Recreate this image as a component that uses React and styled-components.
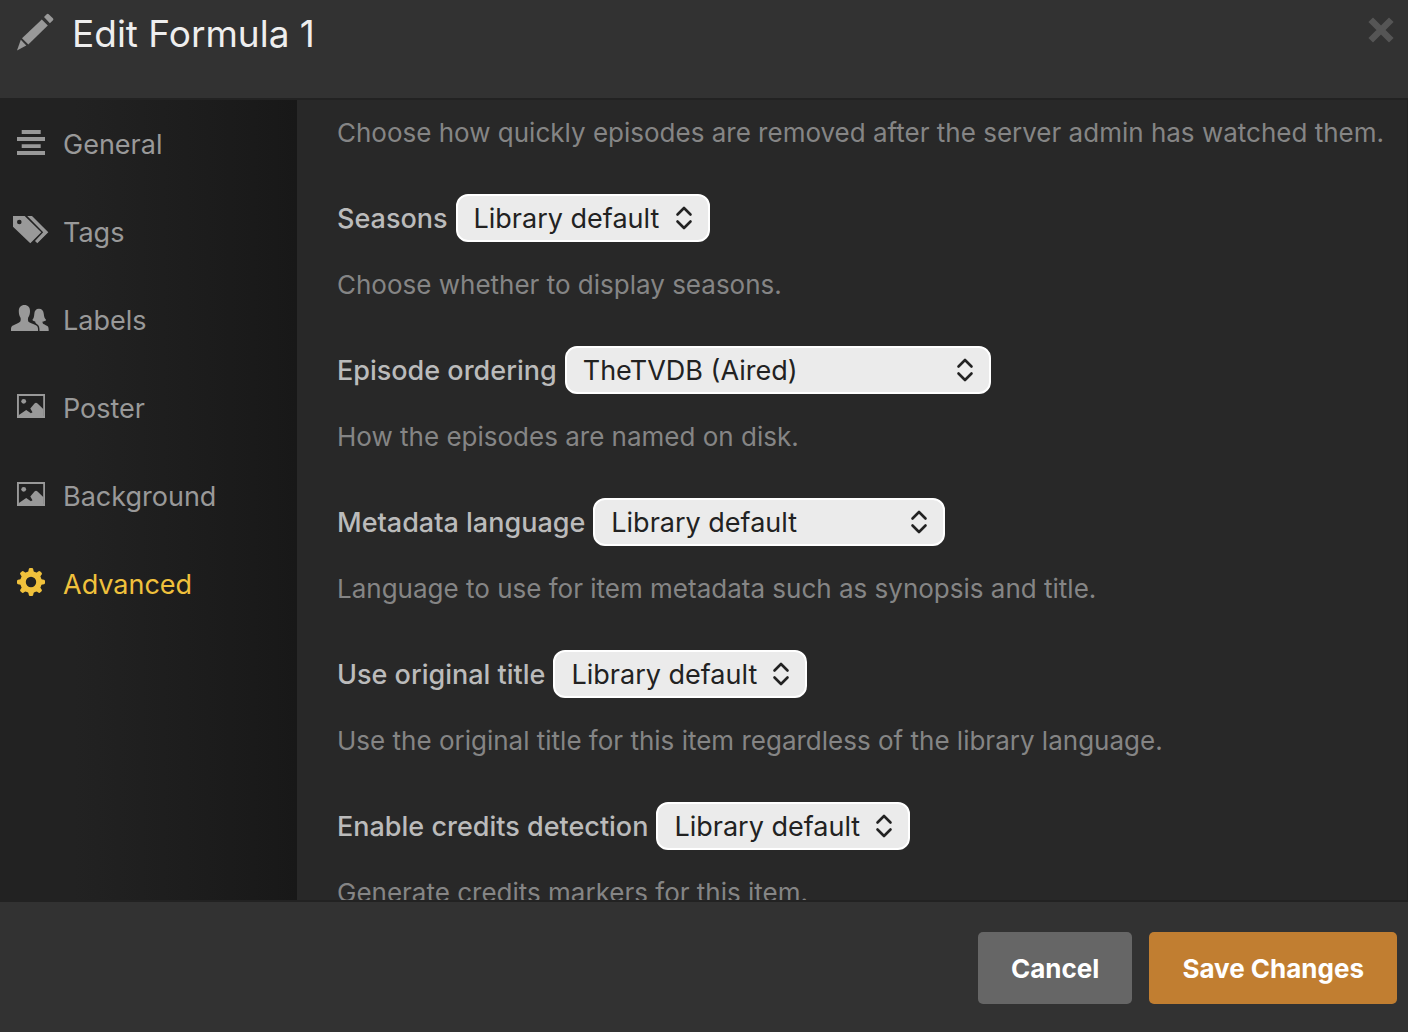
import { useState } from 'react';
import styled, { createGlobalStyle } from 'styled-components';

const GlobalStyle = createGlobalStyle`
  *,
  *::before,
  *::after {
    box-sizing: border-box;
  }
  body {
    margin: 0;
    background: #282828;
    font-family: Inter, 'Liberation Sans', sans-serif;
  }
`;

const PencilIcon = () => (
  <svg width='38' height='38' viewBox='0 0 38 38' fill='currentColor' aria-hidden='true'>
    <path d='M27 4l2.700-2.800q1-1 2 0l4.200 4q1 1 .1 2L32.900 10.200z' />
    <path d='M24.800 6.600l6 5.900-19.500 19.100-6.300-6.300z' />
    <path d='M3.800 26.700l5.500 5.800-9.300 4.900z' />
  </svg>
);

const CloseIcon = () => (
  <svg width='26' height='26' viewBox='0 0 26 26' aria-hidden='true'>
    <path
      d='M5 5l16 16M21 5L5 21'
      stroke='currentColor'
      strokeWidth='6.500'
      strokeLinecap='square'
    />
  </svg>
);

const NavIcon = ({ children }) => (
  <svg width='38' height='30' viewBox='0 0 38 30' fill='currentColor' aria-hidden='true'>
    {children}
  </svg>
);

const LinesIcon = () => (
  <NavIcon>
    <path d='M10.700 3h19v4h-19zM6 10h28v4H6zM10.700 17.200h19V21h-19zM6 24h28v4H6z' />
  </NavIcon>
);

const TagsIcon = () => (
  <NavIcon>
    <path
      fillRule='evenodd'
      d='M2 1h11.700l16.600 16.300-11 11L2 11.700zM8.300 4.700a2.300 2.300 0 1 0 0 4.600 2.300 2.300 0 0 0 0-4.600z'
    />
    <path d='M16.200 1H21l16.300 16.300-11 11-2.300-2.200 8.200-8.800z' />
  </NavIcon>
);

const PeopleIcon = () => (
  <NavIcon>
    <path d='M13.400 2c3.600 0 5.700 2.400 5.600 6 0 3-.6 5-1.900 6.700-.3 1.500-.2 2.800.2 3.800 1 1.300 6 2.800 8 4 1.600 1 1.800 2.500 1.800 5.500H0c0-3.500.2-4.600 2-5.500 2.500-1.400 6.300-2.600 7.300-4 .4-1 .6-2.300.2-3.800C8.300 13 7.800 11 7.800 8c0-3.600 2.100-6 5.600-6z' />
    <path d='M27.900 5.800c3.200 0 4.600 2 4.900 5.200.2 2.500.8 4.700 2.400 6-.9 1-2.200 1.400-3.600 1.600-.2 1 .1 1.900.8 2.400 1.600.9 3.300 1.400 4.300 2.300.9.900 1 2.700 1 4.700h-9.200c0-3.400-.2-5.600-2.700-7-1.200-.7-1.500-1.300-1.600-2.400-1.200-.2-2.200-.7-2.900-1.600 1.400-1.400 1.800-3.500 2-6 .2-3.200 1.700-5.200 4.600-5.200z' />
  </NavIcon>
);

const PictureIcon = () => (
  <NavIcon>
    <path fillRule='evenodd' d='M6 3h28v24H6zM7.900 4.900v20.200h24.300V4.900z' />
    <circle cx='12.700' cy='10.300' r='2.400' />
    <path d='M7.500 24.300L15.200 19l4.700 3.200 1.600-.9-2.200-3.700 4.200-5q1.500-1.500 3 0l6 5.700V26h-25z' />
  </NavIcon>
);

const GearIcon = () => (
  <NavIcon>
    <circle cx='20' cy='15' r='8' fill='none' stroke='currentColor' strokeWidth='5.600' />
    {[0, 45, 90, 135, 180, 225, 270, 315].map((angle) => (
      <path
        key={angle}
        d='M17 6l.8-4q.3-1 1.200-1h2q.9 0 1.200 1l.8 4z'
        transform={`rotate(${angle} 20 15)`}
      />
    ))}
  </NavIcon>
);

const tabs = [
  { name: 'General', icon: <LinesIcon /> },
  { name: 'Tags', icon: <TagsIcon /> },
  { name: 'Labels', icon: <PeopleIcon /> },
  { name: 'Poster', icon: <PictureIcon /> },
  { name: 'Background', icon: <PictureIcon /> },
  { name: 'Advanced', icon: <GearIcon /> },
];

const fields = [
  {
    id: 'seasons',
    label: 'Seasons',
    value: 'Library default',
    width: 254,
    hint: 'Choose whether to display seasons.',
  },
  {
    id: 'episode-ordering',
    label: 'Episode ordering',
    value: 'TheTVDB (Aired)',
    width: 426,
    hint: 'How the episodes are named on disk.',
  },
  {
    id: 'metadata-language',
    label: 'Metadata language',
    value: 'Library default',
    width: 352,
    hint: 'Language to use for item metadata such as synopsis and title.',
  },
  {
    id: 'original-title',
    label: 'Use original title',
    value: 'Library default',
    width: 254,
    hint: 'Use the original title for this item regardless of the library language.',
  },
  {
    id: 'credits-detection',
    label: 'Enable credits detection',
    value: 'Library default',
    width: 254,
    hint: 'Generate credits markers for this item.',
  },
];

const SelectField = ({ id, label, value, width, hint }) => (
  <Field>
    <FieldRow>
      <Label htmlFor={id}>{label}</Label>
      <SelectWrap $width={width}>
        <Select id={id} defaultValue={value} aria-describedby={`${id}-hint`}>
          <option>{value}</option>
        </Select>
        <svg width='18' height='24' viewBox='0 0 18 24' aria-hidden='true'>
          <path
            d='M2.500 8.500L9 2l6.500 6.500M2.500 15.500L9 22l6.500-6.500'
            fill='none'
            stroke='currentColor'
            strokeWidth='2.600'
            strokeLinecap='round'
            strokeLinejoin='round'
          />
        </svg>
      </SelectWrap>
    </FieldRow>
    <Hint id={`${id}-hint`}>{hint}</Hint>
  </Field>
);

const App = () => {
  const [active, setActive] = useState('Advanced');

  return (
    <Modal role='dialog' aria-labelledby='modal-title'>
      <GlobalStyle />
      <Header>
        <PencilIcon />
        <Title id='modal-title'>Edit Formula 1</Title>
        <CloseButton type='button' aria-label='Close'>
          <CloseIcon />
        </CloseButton>
      </Header>
      <Body>
        <Sidebar>
          {tabs.map(({ name, icon }) => (
            <NavLink
              key={name}
              href={`#${name.toLowerCase()}`}
              $active={name === active}
              onClick={() => setActive(name)}
            >
              {icon}
              {name}
            </NavLink>
          ))}
        </Sidebar>
        <Content>
          <Hint>
            Choose how quickly episodes are removed after the server admin has
            watched them.
          </Hint>
          {fields.map((field) => (
            <SelectField key={field.id} {...field} />
          ))}
        </Content>
      </Body>
      <Footer>
        <Button type='button'>Cancel</Button>
        <Button type='button' $primary>
          Save Changes
        </Button>
      </Footer>
    </Modal>
  );
};

export default App;

const Modal = styled.div`
  display: flex;
  flex-direction: column;
  height: 100vh;
`;

const Header = styled.header`
  display: flex;
  align-items: flex-start;
  flex-shrink: 0;
  padding: 13px 14px 43px 17px;
  background: #323232;
  border-bottom: 2px solid #222;
  color: #999;
`;

const Title = styled.h1`
  flex: 1;
  margin: 0 0 0 17px;
  color: #eee;
  font-size: 37px;
  font-weight: 400;
  line-height: 42px;
`;

const CloseButton = styled.button`
  display: flex;
  padding: 4px 0 0;
  border: 0;
  background: transparent;
  color: #555;
  cursor: pointer;
`;

const Body = styled.div`
  display: flex;
  flex: 1;
  min-height: 0;
`;

const Sidebar = styled.nav`
  flex: 0 0 297px;
  background: linear-gradient(to right, #222 25%, #181818);
`;

const NavLink = styled.a`
  display: flex;
  align-items: center;
  gap: 14px;
  height: 88px;
  padding-left: 11px;
  color: ${({ $active }) => ($active ? '#f0c13c' : '#999')};
  font-size: 27px;
  text-decoration: none;
  svg {
    margin-bottom: 4px;
  }
`;

const Content = styled.main`
  flex: 1;
  min-width: 0;
  padding: 15px 20px 0 40px;
  background: #282828;
  border-right: 1px solid #222;
  overflow-y: auto;
  scrollbar-width: none;
`;

const Field = styled.div`
  margin-top: 43px;
`;

const FieldRow = styled.div`
  display: flex;
  align-items: center;
  gap: 8px;
  margin-bottom: 25px;
`;

const Label = styled.label`
  color: #bbb;
  font-size: 27px;
  font-weight: 450;
`;

const SelectWrap = styled.div`
  position: relative;
  width: ${({ $width }) => $width}px;
  color: #222;
  svg {
    position: absolute;
    top: 12px;
    right: 17px;
    pointer-events: none;
  }
`;

const Select = styled.select`
  width: 100%;
  height: 48px;
  padding: 0 40px 0 16px;
  appearance: none;
  background: #ebebeb;
  border: 2px solid #fff;
  border-radius: 12px;
  color: inherit;
  font: inherit;
  font-size: 27px;
`;

const Hint = styled.p`
  margin: 0;
  color: #858585;
  font-size: 26px;
  line-height: 36px;
`;

const Footer = styled.footer`
  display: flex;
  justify-content: flex-end;
  flex-shrink: 0;
  gap: 17px;
  padding: 30px 11px 28px;
  background: #323232;
  border-top: 2px solid #222;
`;

const Button = styled.button`
  height: 72px;
  padding: 0 33px;
  border: 0;
  border-radius: 5px;
  background: ${({ $primary }) => ($primary ? '#c17e31' : '#666')};
  color: #fff;
  font: inherit;
  font-size: 26px;
  font-weight: 700;
  cursor: pointer;
`;
